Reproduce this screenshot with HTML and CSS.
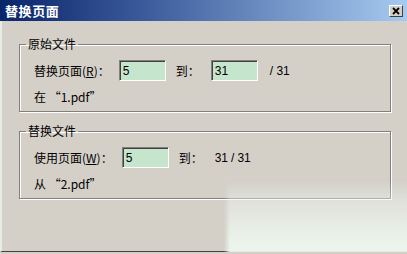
FILE: index.html
```html
<!DOCTYPE html>
<html>
<head>
<meta charset="utf-8">
<link rel="stylesheet" href="styles.css">
</head>
<body>
<div class="window">
  <div class="titlebar">
    <span class="title">替换页面</span>
    <span class="close"><svg width="14" height="12" viewBox="0 0 14 12"><path d="M4 3 L10 9 M10 3 L4 9" stroke="#000" stroke-width="1.8" fill="none"/></svg></span>
  </div>
  <div class="content">
    <fieldset class="group g1">
      <legend>原始文件</legend>
      <div class="inner">
        <div class="row">
          <span class="label">替换页面(<u>R</u>)：</span>
          <input class="field" type="text" value="5">
          <span class="to">到：</span>
          <input class="field f2" type="text" value="31">
          <span class="total">/ 31</span>
        </div>
        <div class="note">在 “1.pdf”</div>
      </div>
    </fieldset>
    <fieldset class="group g2">
      <legend>替换文件</legend>
      <div class="inner">
        <div class="row">
          <span class="label">使用页面(<u>W</u>)：</span>
          <input class="field" type="text" value="5">
          <span class="to">到：</span>
          <span class="range">31<span class="sl">/</span>31</span>
        </div>
        <div class="note">从 “2.pdf”</div>
      </div>
    </fieldset>
  </div>
  <div class="watermark"></div>
</div>
</body>
</html>
```
FILE: styles.css
```css
html, body {
  margin: 0;
  padding: 0;
  background: #d4d0c8;
}
.window {
  position: relative;
  width: 407px;
  height: 252px;
  box-sizing: border-box;
  background: #d4d0c8;
  border-left: 2px solid #e4eee4;
  border-bottom: 1px solid #404040;
  font-family: "Noto Sans CJK SC", "Liberation Sans", sans-serif;
  font-size: 12px;
  color: #000;
}
.titlebar {
  height: 21px;
  margin-left: -2px;
  background: linear-gradient(to right, #0a246a 0%, #3a5a9a 35%, #a6caf0 100%);
  display: flex;
  align-items: center;
  justify-content: space-between;
  padding: 0 4px 0 5px;
}
.title {
  color: #fff;
  font-weight: bold;
  font-size: 13px;
  letter-spacing: 0.6px;
  line-height: 16px;
}
.close {
  width: 14px;
  height: 12px;
  box-sizing: border-box;
  background: #d4d0c8;
  border-top: 1px solid #fff;
  border-left: 1px solid #fff;
  border-right: 1px solid #404040;
  border-bottom: 1px solid #404040;
  display: flex;
  align-items: center;
  justify-content: center;
}
.close svg {
  display: block;
  margin: -1px;
}
.content {
  padding-left: 17px;
}
.group {
  width: 372px;
  box-sizing: border-box;
  margin: 0;
  padding: 0;
  border: 1px solid #808080;
  box-shadow: inset 1px 1px #fff, 1px 1px #fff;
}
.g1 {
  margin-top: 16px;
}
.g2 {
  margin-top: 12px;
}
.group legend {
  margin-left: 6px;
  padding: 0 2px;
  line-height: 14px;
  font-size: 12px;
}
.inner {
  display: flex;
  flex-direction: column;
  gap: 9px;
  padding: 9px 0 7px 14px;
}
.row {
  display: flex;
  align-items: center;
  height: 21px;
}
.label {
  margin-right: 9px;
  white-space: nowrap;
}
.field {
  width: 47px;
  height: 21px;
  box-sizing: border-box;
  margin: 0;
  padding: 1px 0 0 3px;
  border-top: 1px solid #808080;
  border-left: 1px solid #808080;
  border-right: 1px solid #fff;
  border-bottom: 1px solid #fff;
  box-shadow: inset 1px 1px #404040;
  background: #c6e5cd;
  font-family: "Liberation Sans", sans-serif;
  font-size: 12px;
  color: #000;
  outline: none;
}
.to {
  margin-left: 10px;
  margin-right: 11px;
}
.total {
  margin-left: 12px;
  font-family: "Liberation Sans", sans-serif;
}
.range {
  margin-left: 1px;
  font-family: "Liberation Sans", sans-serif;
}
.sl {
  margin: 0 3px;
}
.note {
  line-height: 14px;
}
.watermark {
  position: absolute;
  left: 222px;
  top: 180px;
  right: 0;
  bottom: -3px;
  background: linear-gradient(to bottom, rgba(236,242,236,0) 0%, rgba(236,243,236,0.5) 30%, rgba(237,246,238,0.85) 75%, rgba(238,248,240,0.95) 100%);
  -webkit-mask-image: linear-gradient(to right, transparent 0, #000 6px);
  mask-image: linear-gradient(to right, transparent 0, #000 6px);
}
```
